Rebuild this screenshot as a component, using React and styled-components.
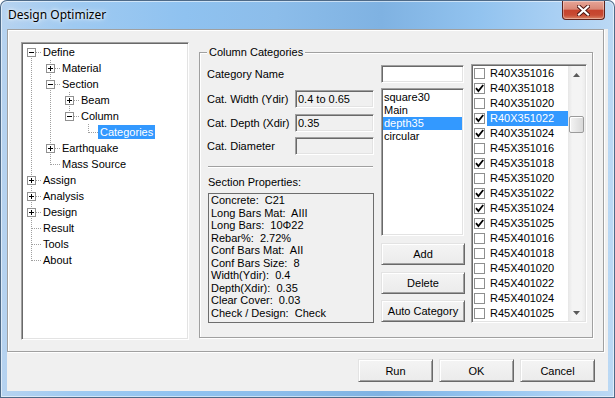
import React from "react";
import styled, { createGlobalStyle, css } from "styled-components";

// data
const treeRows = [
  { label: "Define", guides: ["first"], box: "minus" },
  { label: "Material", guides: ["pass", "tee"], box: "plus" },
  { label: "Section", guides: ["pass", "tee"], box: "minus" },
  { label: "Beam", guides: ["pass", "pass", "tee"], box: "plus" },
  { label: "Column", guides: ["pass", "pass", "elbow"], box: "minus" },
  { label: "Categories", guides: ["pass", "pass", "none", "elbow"], selected: true },
  { label: "Earthquake", guides: ["pass", "tee"], box: "plus" },
  { label: "Mass Source", guides: ["pass", "elbow"] },
  { label: "Assign", guides: ["tee"], box: "plus" },
  { label: "Analysis", guides: ["tee"], box: "plus" },
  { label: "Design", guides: ["tee"], box: "plus" },
  { label: "Result", guides: ["tee"] },
  { label: "Tools", guides: ["tee"] },
  { label: "About", guides: ["elbow"] },
];

const categories = ["square30", "Main", "depth35", "circular"];

const sections = [
  ["R40X351016", false],
  ["R40X351018", true],
  ["R40X351020", false],
  ["R40X351022", true, true],
  ["R40X351024", true],
  ["R45X351016", false],
  ["R45X351018", true],
  ["R45X351020", false],
  ["R45X351022", true],
  ["R45X351024", true],
  ["R45X351025", true],
  ["R45X401016", false],
  ["R45X401018", false],
  ["R45X401020", false],
  ["R45X401022", false],
  ["R45X401024", false],
  ["R45X401025", false],
];

const properties = [
  "Concrete:  C21",
  "Long Bars Mat:  AIII",
  "Long Bars:  10Φ22",
  "Rebar%:  2.72%",
  "Conf Bars Mat:  AII",
  "Conf Bars Size:  8",
  "Width(Ydir):  0.4",
  "Depth(Xdir):  0.35",
  "Clear Cover:  0.03",
  "Check / Design:  Check",
];

// tree guide lines
const dotV = "repeating-linear-gradient(to bottom, #a0a0a0 0 1px, transparent 1px 2px)";
const dotH = "repeating-linear-gradient(to right, #a0a0a0 0 1px, transparent 1px 2px)";

const guideBg = {
  none: "none",
  pass: `${dotV} 8px 0 / 1px 16px no-repeat`,
  tee: `${dotV} 8px 0 / 1px 16px no-repeat, ${dotH} 9px 8px / 10px 1px no-repeat`,
  elbow: `${dotV} 8px 0 / 1px 9px no-repeat, ${dotH} 9px 8px / 10px 1px no-repeat`,
  first: `${dotV} 8px 8px / 1px 8px no-repeat, ${dotH} 9px 8px / 10px 1px no-repeat`,
};

const ExpandBox = ({ open }) => (
  <svg width="9" height="9" viewBox="0 0 9 9">
    <rect x="0.5" y="0.5" width="8" height="8" fill="#fff" stroke="#919191" />
    <line x1="2" y1="4.5" x2="7" y2="4.5" stroke="#000" />
    {!open && <line x1="4.5" y1="2" x2="4.5" y2="7" stroke="#000" />}
  </svg>
);

const CheckMark = () => (
  <svg width="9" height="9" viewBox="0 0 9 9">
    <path d="M1 4.2 L3.4 7 L8.2 1" fill="none" stroke="#000" strokeWidth="1.8" />
  </svg>
);

const Arrow = ({ down }) => (
  <svg width="7" height="4" viewBox="0 0 7 4">
    <polygon points={down ? "0,0 7,0 3.5,4" : "0,4 7,4 3.5,0"} fill="#5a5a5a" />
  </svg>
);

const CloseGlyph = () => (
  <svg width="13" height="11" viewBox="0 0 13 11">
    <path d="M2 1.5 L11 9.5 M11 1.5 L2 9.5" stroke="#4a1410" strokeWidth="4" strokeLinecap="square" />
    <path d="M2 1.5 L11 9.5 M11 1.5 L2 9.5" stroke="#fff" strokeWidth="2.2" strokeLinecap="square" />
  </svg>
);

const App = () => {
  return (
    <>
      <GlobalStyle />
      <Window>
        <TitleBar>
          <Title>Design Optimizer</Title>
          <CloseButton>
            <CloseGlyph />
          </CloseButton>
        </TitleBar>

        <Client>
          <Panel>
            <Tree>
              {treeRows.map((row) => (
                <TreeRow key={row.label}>
                  {row.guides.map((g, i) => (
                    <GuideCell key={i} $kind={g}>
                      {i === row.guides.length - 1 && row.box && (
                        <ExpandBox open={row.box === "minus"} />
                      )}
                    </GuideCell>
                  ))}
                  <TreeLabel $selected={row.selected}>{row.label}</TreeLabel>
                </TreeRow>
              ))}
            </Tree>

            <GroupBox>
              <Legend>Column Categories</Legend>

              <LeftColumn>
                <FieldRow>
                  <FieldLabel>Category Name</FieldLabel>
                </FieldRow>
                <FieldRow $mt={7}>
                  <FieldLabel>Cat. Width (Ydir)</FieldLabel>
                  <TextBox $readOnly>0.4 to 0.65</TextBox>
                </FieldRow>
                <FieldRow $mt={6}>
                  <FieldLabel>Cat. Depth (Xdir)</FieldLabel>
                  <TextBox $readOnly>0.35</TextBox>
                </FieldRow>
                <FieldRow $mt={5}>
                  <FieldLabel>Cat. Diameter</FieldLabel>
                  <TextBox $readOnly />
                </FieldRow>
                <Separator />
                <PropsLabel>Section Properties:</PropsLabel>
                <PropsBox>
                  {properties.map((p) => (
                    <div key={p}>{p}</div>
                  ))}
                </PropsBox>
              </LeftColumn>

              <MiddleColumn>
                <TextBox $width={83} />
                <ListBox>
                  {categories.map((c) => (
                    <ListItem key={c} $selected={c === "depth35"}>
                      {c}
                    </ListItem>
                  ))}
                </ListBox>
                <SideButton $mt={7}>Add</SideButton>
                <SideButton $mt={7}>Delete</SideButton>
                <SideButton $mt={6}>Auto Category</SideButton>
              </MiddleColumn>

              <CheckList>
                <CheckItems>
                  {sections.map(([name, checked, selected]) => (
                    <CheckRow key={name}>
                      <CheckBox>{checked && <CheckMark />}</CheckBox>
                      <CheckText $selected={selected}>{name}</CheckText>
                    </CheckRow>
                  ))}
                </CheckItems>
                <ScrollBar>
                  <ScrollArrow>
                    <Arrow />
                  </ScrollArrow>
                  <ScrollTrack>
                    <Thumb $offset={33} />
                  </ScrollTrack>
                  <ScrollArrow>
                    <Arrow down />
                  </ScrollArrow>
                </ScrollBar>
              </CheckList>
            </GroupBox>
          </Panel>

          <ButtonBar>
            <DialogButton>Run</DialogButton>
            <DialogButton>OK</DialogButton>
            <DialogButton>Cancel</DialogButton>
          </ButtonBar>
        </Client>
      </Window>
    </>
  );
};

export default App;

const GlobalStyle = createGlobalStyle`
  html, body {
    margin: 0;
    padding: 0;
    background: #ffffff;
  }
  body {
    font-family: "Liberation Sans", Arial, sans-serif;
    font-size: 11px;
    color: #000;
  }
  * {
    box-sizing: border-box;
  }
`;

const sunken = css`
  border: 1px solid;
  border-color: #a0a0a0 #ffffff #ffffff #a0a0a0;
  box-shadow: inset 1px 1px 0 #696969, inset -1px -1px 0 #e3e3e3;
  padding: 1px;
`;

const etched = css`
  border: 1px solid #a0a0a0;
  box-shadow: inset 1px 1px 0 #ffffff, 1px 1px 0 #ffffff;
`;

const raised = css`
  border: 1px solid;
  border-color: #e3e3e3 #696969 #696969 #e3e3e3;
  box-shadow: inset 1px 1px 0 #ffffff, inset -1px -1px 0 #a0a0a0;
  background: linear-gradient(#f4f4f4, #ebebeb);
  font-family: "Liberation Sans", Arial, sans-serif;
  font-size: 11px;
  color: #000;
  display: flex;
  align-items: center;
  justify-content: center;
  padding: 0;
`;

const Window = styled.div`
  width: 615px;
  height: 398px;
  display: flex;
  flex-direction: column;
  border-radius: 7px 7px 0 0;
  overflow: hidden;
  background: linear-gradient(
    90deg,
    #b7d3f0 0%,
    #9fcaf1 12%,
    #8fc2f0 30%,
    #8cbdea 45%,
    #7fb2e2 62%,
    #92c3ef 78%,
    #a8cff3 90%,
    #bcd9f4 100%
  );
  box-shadow: inset 0 0 0 1px #4e6a88, inset 0 0 0 2px rgba(255, 255, 255, 0.55);
`;

const TitleBar = styled.div`
  height: 29px;
  flex-shrink: 0;
  display: flex;
  align-items: flex-start;
  justify-content: space-between;
  padding: 0 10px 0 8px;
`;

const Title = styled.div`
  margin-top: 7px;
  font-family: "Noto Sans", "Open Sans", sans-serif;
  font-size: 12px;
  line-height: 16px;
  color: #000;
  text-shadow: 0 0 6px #ffffff, 0 0 3px rgba(255, 255, 255, 0.9);
`;

const CloseButton = styled.div`
  margin-top: 1px;
  width: 43px;
  height: 19px;
  display: flex;
  align-items: center;
  justify-content: center;
  border: 1px solid #5e231c;
  border-top: none;
  border-radius: 0 0 4px 4px;
  background: linear-gradient(#e6a597 0%, #d98877 45%, #c6432d 52%, #c74a33 78%, #da8466 100%);
  box-shadow: inset 0 0 0 1px rgba(255, 255, 255, 0.35);
`;

const Client = styled.div`
  flex: 1;
  margin: 0 7px 7px;
  background: #f0f0f0;
  display: flex;
  flex-direction: column;
`;

const Panel = styled.div`
  ${etched};
  width: 597px;
  height: 323px;
  flex-shrink: 0;
  display: flex;
  align-items: flex-start;
  padding: 12px 10px 0 13px;
`;

const Tree = styled.div`
  ${sunken};
  width: 168px;
  height: 298px;
  flex-shrink: 0;
  background: #ffffff;
  display: flex;
  flex-direction: column;
`;

const TreeRow = styled.div`
  height: 16px;
  display: flex;
  align-items: center;
`;

const GuideCell = styled.span`
  width: 19px;
  height: 16px;
  flex-shrink: 0;
  display: flex;
  align-items: flex-start;
  padding: 4px 0 0 4px;
  background: ${(p) => guideBg[p.$kind]};
`;

const TreeLabel = styled.span`
  margin-left: -1px;
  padding: 0 2px;
  height: 14px;
  line-height: 14px;
  white-space: nowrap;
  background: ${(p) => (p.$selected ? "#3399ff" : "transparent")};
  color: ${(p) => (p.$selected ? "#ffffff" : "#000000")};
`;

const GroupBox = styled.div`
  ${etched};
  position: relative;
  margin: 10px 0 0 10px;
  width: 394px;
  height: 286px;
  flex-shrink: 0;
  display: flex;
  align-items: flex-start;
  gap: 7px;
  padding: 11px 5px 0 7px;
`;

const Legend = styled.span`
  position: absolute;
  top: -7px;
  left: 7px;
  padding: 0 2px;
  line-height: 13px;
  background: #f0f0f0;
`;

const LeftColumn = styled.div`
  width: 167px;
  margin-top: 1px;
  display: flex;
  flex-direction: column;
`;

const FieldRow = styled.div`
  height: 18px;
  margin-top: ${(p) => p.$mt || 0}px;
  display: flex;
  align-items: center;
  justify-content: space-between;
`;

const FieldLabel = styled.span`
  line-height: 13px;
  white-space: nowrap;
`;

const TextBox = styled.div`
  ${sunken};
  width: ${(p) => p.$width || 79}px;
  height: 18px;
  flex-shrink: 0;
  background: ${(p) => (p.$readOnly ? "#f0f0f0" : "#ffffff")};
  display: flex;
  align-items: center;
  padding: 1px 2px;
  line-height: 13px;
  white-space: nowrap;
`;

const Separator = styled.div`
  margin: 11px 0 0 1px;
  width: 165px;
  height: 2px;
  border-top: 1px solid #a0a0a0;
  border-bottom: 1px solid #ffffff;
`;

const PropsLabel = styled.div`
  margin: 8px 0 0 1px;
  line-height: 13px;
`;

const PropsBox = styled.div`
  margin: 4px 0 0 1px;
  width: 166px;
  height: 130px;
  border: 1px solid #6d6d6d;
  padding: 0 2px;
  line-height: 12.5px;
  white-space: pre;
`;

const MiddleColumn = styled.div`
  width: 83px;
  margin-top: 1px;
  display: flex;
  flex-direction: column;
`;

const ListBox = styled.div`
  ${sunken};
  margin-top: 5px;
  height: 148px;
  background: #ffffff;
  padding-top: 2px;
`;

const ListItem = styled.div`
  height: 13px;
  line-height: 13px;
  padding-left: 1px;
  background: ${(p) => (p.$selected ? "#3399ff" : "transparent")};
  color: ${(p) => (p.$selected ? "#ffffff" : "#000000")};
`;

const SideButton = styled.button`
  ${raised};
  margin-top: ${(p) => p.$mt}px;
  width: 84px;
  height: 22px;
`;

const CheckList = styled.div`
  ${sunken};
  width: 116px;
  height: 259px;
  flex-shrink: 0;
  background: #ffffff;
  display: flex;
`;

const CheckItems = styled.div`
  flex: 1;
  display: flex;
  flex-direction: column;
`;

const CheckRow = styled.div`
  height: 15px;
  display: flex;
  align-items: center;
  padding-left: 1px;
`;

const CheckBox = styled.span`
  width: 11px;
  height: 11px;
  flex-shrink: 0;
  border: 1px solid #8e8f8f;
  background: #ffffff;
  display: flex;
  align-items: center;
  justify-content: center;
`;

const CheckText = styled.span`
  flex: 1;
  margin-left: 2px;
  height: 15px;
  line-height: 15px;
  padding: 0 3px;
  background: ${(p) => (p.$selected ? "#3399ff" : "transparent")};
  color: ${(p) => (p.$selected ? "#ffffff" : "#000000")};
`;

const ScrollBar = styled.div`
  width: 17px;
  display: flex;
  flex-direction: column;
  background: linear-gradient(90deg, #e6e6e6, #f4f4f4 25%, #f4f4f4 80%, #ececec);
`;

const ScrollArrow = styled.div`
  height: 17px;
  display: flex;
  align-items: center;
  justify-content: center;
`;

const ScrollTrack = styled.div`
  flex: 1;
  display: flex;
  flex-direction: column;
`;

const Thumb = styled.div`
  margin: ${(p) => p.$offset}px 1px 0;
  height: 17px;
  border: 1px solid #9b9b9b;
  border-radius: 2px;
  background: linear-gradient(90deg, #f4f4f4, #e6e6e6 50%, #d9d9d9);
  box-shadow: inset 1px 1px 0 #ffffff;
`;

const ButtonBar = styled.div`
  margin-top: 7px;
  padding-right: 13px;
  display: flex;
  justify-content: flex-end;
  gap: 6px;
`;

const DialogButton = styled.button`
  ${raised};
  width: 75px;
  height: 23px;
`;
